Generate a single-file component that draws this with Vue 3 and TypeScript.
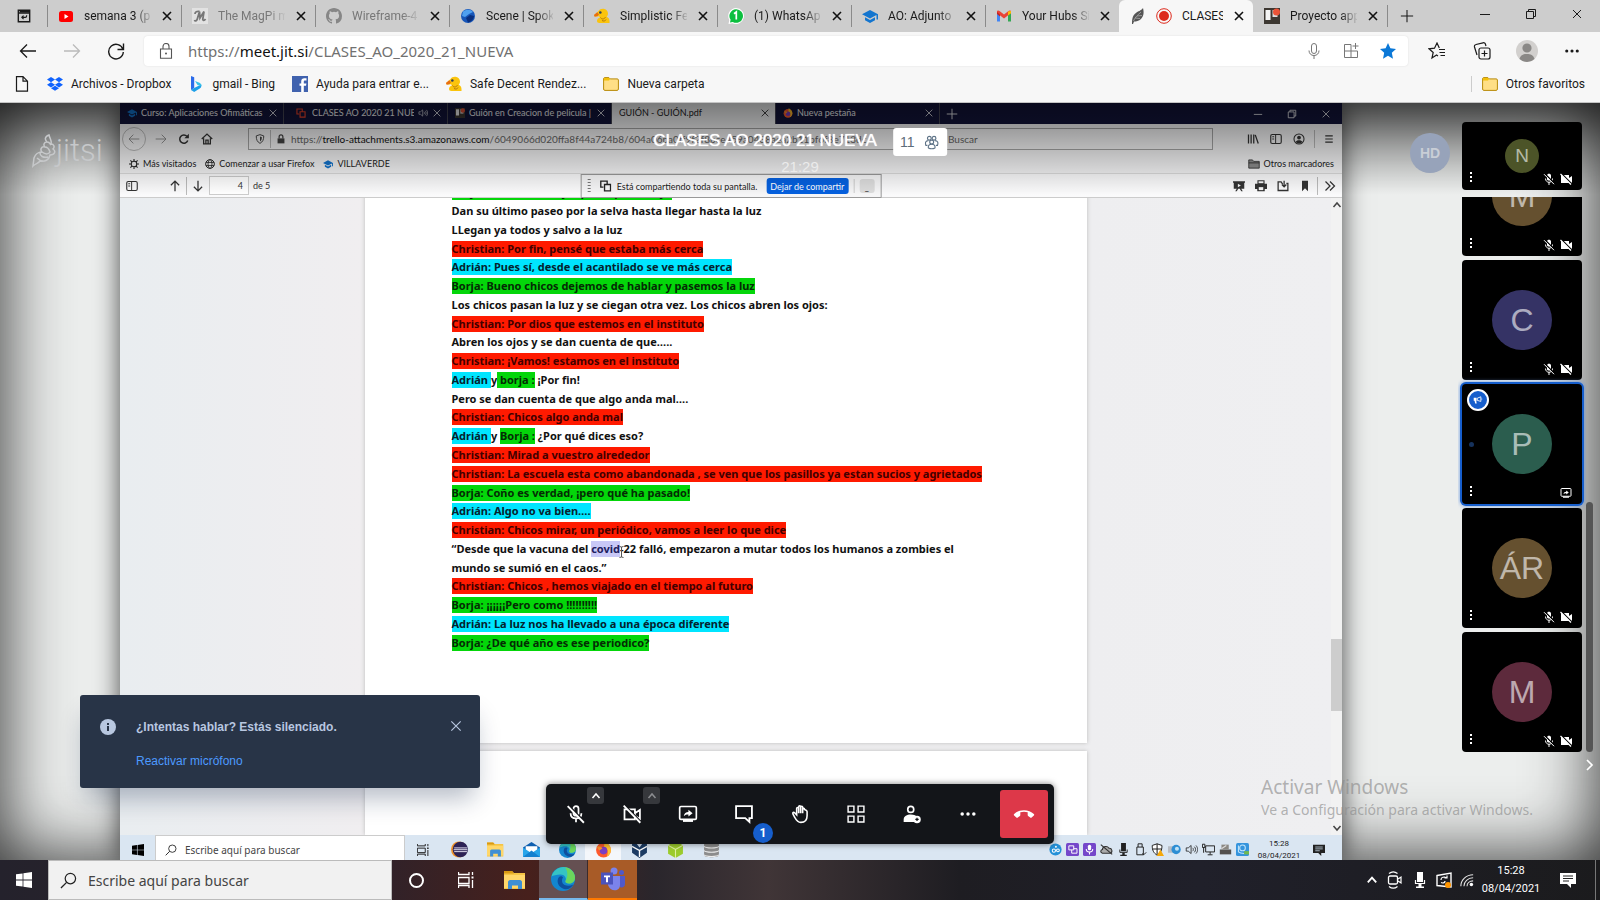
<script setup lang="ts">
import { ref } from 'vue'

interface Tab { icon: string; title: string; idle?: boolean; active?: boolean; recording?: boolean }
interface Tile { initials: string; color: string; sharing?: boolean }
type Tone = 'plain' | 'red' | 'blue' | 'green' | 'sel'
type Segment = [Tone, string]

const tabs: Tab[] = [
  { icon: 'youtube', title: 'semana 3 (pi' },
  { icon: 'magpi', title: 'The MagPi m', idle: true },
  { icon: 'github', title: 'Wireframe-4', idle: true },
  { icon: 'spoke', title: 'Scene | Spok' },
  { icon: 'duck', title: 'Simplistic Fe' },
  { icon: 'whatsapp', title: '(1) WhatsAp' },
  { icon: 'cap', title: 'AO: Adjunto' },
  { icon: 'gmail', title: 'Your Hubs Si' },
  { icon: 'feather', title: 'CLASES', active: true, recording: true },
  { icon: 'trello', title: 'Proyecto app' },
]

const favorites = [
  { icon: 'dropbox', title: 'Archivos - Dropbox' },
  { icon: 'bing', title: 'gmail - Bing' },
  { icon: 'facebook', title: 'Ayuda para entrar e...' },
  { icon: 'duck', title: 'Safe Decent Rendez...' },
  { icon: 'folder', title: 'Nueva carpeta' },
]

const innerTabs = [
  { icon: 'cap', title: 'Curso: Aplicaciones Ofimáticas' },
  { icon: 'screens', title: 'CLASES AO 2020 21 NUEVA', sound: true },
  { icon: 'trello', title: 'Guión en Creacion de pelicula |' },
  { icon: '', title: 'GUIÓN - GUIÓN.pdf', active: true },
  { icon: 'firefox', title: 'Nueva pestaña' },
]

const script: Segment[][] = [
  [['green', 'Borja: Bueno chicos ya queda poco, vaya']],
  [['plain', 'Dan su último paseo por la selva hasta llegar hasta la luz']],
  [['plain', 'LLegan ya todos y salvo a la luz']],
  [['red', 'Christian: Por fin, pensé que estaba más cerca']],
  [['blue', 'Adrián: Pues sí, desde el acantilado se ve más cerca']],
  [['green', 'Borja: Bueno chicos dejemos de hablar y pasemos la luz']],
  [['plain', 'Los chicos pasan la luz y se ciegan otra vez. Los chicos abren los ojos:']],
  [['red', 'Christian: Por dios que estemos en el instituto']],
  [['plain', 'Abren los ojos y se dan cuenta de que…..']],
  [['red', 'Christian: ¡Vamos! estamos en el instituto']],
  [['blue', 'Adrián '], ['plain', 'y'], ['green', ' borja :'], ['plain', ' ¡Por fin!']],
  [['plain', 'Pero se dan cuenta de que algo anda mal….']],
  [['red', 'Christian: Chicos algo anda mal']],
  [['blue', 'Adrián '], ['plain', 'y '], ['green', 'Borja :'], ['plain', ' ¿Por qué dices eso?']],
  [['red', 'Christian: Mirad a vuestro alrededor']],
  [['red', 'Christian: La escuela esta como abandonada , se ven que los pasillos ya estan sucios y agrietados']],
  [['green', 'Borja: Coño es verdad, ¡pero qué ha pasado!']],
  [['blue', 'Adrián: Algo no va bien….']],
  [['red', 'Christian: Chicos mirar, un periódico, vamos a leer lo que dice']],
  [['plain', '“Desde que la vacuna del '], ['sel', 'covid'], ['plain', '-22 falló, empezaron a mutar todos los humanos a zombies el']],
  [['plain', 'mundo se sumió en el caos.”']],
  [['red', 'Christian: Chicos , hemos viajado en el tiempo al futuro']],
  [['green', 'Borja: ¡¡¡¡¡¡Pero como !!!!!!!!!!']],
  [['blue', 'Adrián: La luz nos ha llevado a una época diferente']],
  [['green', 'Borja: ¿De qué año es ese periodico?']],
]

const tiles: Tile[] = [
  { initials: 'M', color: '#65502f' },
  { initials: 'C', color: '#353365' },
  { initials: 'P', color: '#2b5d4e', sharing: true },
  { initials: 'ÁR', color: '#65502f' },
  { initials: 'M', color: '#5d2a3c' },
]

const innerApps = ['taskview', 'eclipse', 'explorer', 'mail', 'edge', 'firefox', 'vbox', 'android', 'db']
const innerTray = ['jitsidot', 'purplescreens', 'purplemic', 'cloudoff', 'mic', 'usb', 'shieldwarn', 'globeblue', 'speaker', 'network', 'printer', 'intel']
const controls = [
  { icon: 'micoff', label: 'Activar micrófono', caret: true },
  { icon: 'camoff', label: 'Activar cámara', caret: true, dim: true },
  { icon: 'share', label: 'Compartir pantalla' },
  { icon: 'chat', label: 'Abrir chat', badge: '1' },
  { icon: 'hand', label: 'Levantar la mano' },
  { icon: 'gridview', label: 'Vista en cuadrícula' },
  { icon: 'invite', label: 'Invitar personas' },
  { icon: 'more', label: 'Más acciones' },
]

const page = ref('4')
const query = ref('')
const innerQuery = ref('')
const notice = ref(true)
</script>

<template>
  <div class="desktop">
    <svg class="defs" aria-hidden="true">
      <symbol id="x" viewBox="0 0 12 12"><path d="M2 2l8 8M10 2l-8 8" fill="none" stroke="currentColor" /></symbol>
      <symbol id="xbold" viewBox="0 0 12 12"><path d="M2 2l8 8M10 2l-8 8" fill="none" stroke="currentColor" stroke-width="1.600" /></symbol>
      <symbol id="plus" viewBox="0 0 16 16"><path d="M8 1v14M1 8h14" fill="none" stroke="currentColor" stroke-width="1.2" /></symbol>
      <symbol id="min" viewBox="0 0 12 12"><path d="M1 6.5h10" stroke="currentColor" /></symbol>
      <symbol id="restore" viewBox="0 0 12 12"><path d="M1.5 3.5h7v7h-7zM3.5 3.5v-2h7v7h-2" fill="none" stroke="currentColor" /></symbol>
      <symbol id="tabmenu" viewBox="0 0 16 16"><path d="M1.5 1.5h13v13h-13zM1.5 4.5h13" fill="none" stroke="currentColor" stroke-width="1.6" /><path d="M3 2h11v2H3z" fill="currentColor" /><path d="M7.500 7.500l-2 2 2 2M6 9.500h3.500a1.500 1.500 0 0 0 1.500-1.500V7" fill="none" stroke="currentColor" stroke-width="1.300" /></symbol>
      <symbol id="youtube" viewBox="0 0 16 16"><rect x="1" y="3" width="14" height="11" rx="2.500" fill="#f00" /><path d="M6.500 6v5l4-2.500z" fill="#fff" /></symbol>
      <symbol id="magpi" viewBox="0 0 16 16"><path d="M0 0h16v16H0z" fill="#e2e2e2" /><path d="M2.500 12c.5 1.500 2.300 1 2.800-1L7.500 3.500 8 10l4-6.500L10.800 11c-.1 2 1.700 1.500 2.700 0M3 6c0-2 2-3 4.500-2.500" fill="none" stroke="#777" stroke-width="1.800" /></symbol>
      <symbol id="github" viewBox="0 0 16 16"><path fill="#868686" d="M8 0C3.580 0 0 3.580 0 8c0 3.540 2.290 6.530 5.470 7.590.4.070.55-.17.55-.38v-1.490c-2.230.480-2.700-.940-2.700-.940-.360-.920-.890-1.170-.890-1.170-.730-.500.060-.490.060-.490.800.060 1.230.830 1.230.830.710 1.220 1.870.870 2.330.660.070-.520.280-.870.510-1.070-1.780-.200-3.640-.890-3.640-3.950 0-.870.310-1.590.820-2.150-.080-.200-.360-1.020.080-2.120 0 0 .670-.210 2.200.820a7.600 7.600 0 0 1 4 0c1.530-1.040 2.200-.820 2.200-.820.440 1.100.160 1.920.080 2.120.510.560.820 1.270.820 2.150 0 3.070-1.870 3.750-3.650 3.950.290.250.540.730.540 1.480v2.200c0 .210.150.460.550.380A8 8 0 0 0 16 8c0-4.420-3.580-8-8-8z" /></symbol>
      <symbol id="spoke" viewBox="0 0 16 16"><circle cx="8" cy="8" r="7" fill="#1756b8" /><path d="M3 3.500C6 1 11 1 13 4L9 6 5 9 2 8z" fill="#4fa0ef" /><path d="M6 10l4-3 4 1c0 3-3 6-6 6.500z" fill="#092f7e" /></symbol>
      <symbol id="duck" viewBox="0 0 16 16"><path d="M4.500 3C5.500 1.200 7.500.5 9.500.7c2.500.3 4.500 2.300 4.500 4.800 0 1.300-.5 2.300-1.300 3.300 1.500.7 2.800 2.200 2.800 4.200v2H5.500c-1.700 0-2.500-1-2.500-2.300 0-1.500 1.300-2.700 3-3.200l-1-1.300-3.500.5L0 7l3-2.500z" fill="#fbc40c" /><path d="M0 7l3.200-2.700L5 6.500 3.500 8l-3 .7z" fill="#e86d12" /><path d="M6.500 9.500c1 2 3.500 2 5-.3M8 12.500c1.500 1 3.500.5 4-1" fill="none" stroke="#b4770d" /><circle cx="6.300" cy="4.500" r="1.300" fill="#31405c" /></symbol>
      <symbol id="whatsapp" viewBox="0 0 16 16"><path d="M8 0a8 8 0 1 1-3.500 15.200L.5 16l.8-4A8 8 0 0 1 8 0z" fill="#fff" /><path d="M8 1.200a6.800 6.800 0 1 1-3.200 12.700l-2.800.6.6-2.700A6.800 6.800 0 0 1 8 1.200z" fill="#0cbf3f" /><path d="M6 5.700L8.300 4v7.500" fill="none" stroke="#fff" stroke-width="1.700" /></symbol>
      <symbol id="cap" viewBox="0 0 16 16"><path d="M8 2L0 6.200l8 4.300 6.500-3.500v4.500H16V6.200z" fill="#1375cf" /><path d="M3 9.200v3L8 15l5-2.800v-3l-5 2.700z" fill="#1375cf" /></symbol>
      <symbol id="gmail" viewBox="0 0 16 16"><path d="M1 4v9.500h3V7" fill="#4285f4" /><path d="M15 4v9.500h-3V7" fill="#34a853" /><path d="M1 3.500C1 2.500 2.500 2 3.500 3L8 6.500 12.500 3c1-1 2.500-.5 2.500.500V5l-7 5.500L1 5z" fill="#ea4335" /><path d="M12 3.400L15 3v2.300L12 7.500z" fill="#fbbc04" /><path d="M1 4l3 2.500v2L1 6z" fill="#c5221f" /></symbol>
      <symbol id="feather" viewBox="0 0 16 16"><path d="M13 0c1 4 1 8-2 11-2 2-5 2.500-7 2.500L3 16H2c0-6 1-9 4-11 2-2 5-2 7-5z" fill="#555" /><path d="M3.500 13C5 9 8 7 11 4M5 10l5 .5M7 8l5-.5" fill="none" stroke="#aaa" stroke-width=".8" /></symbol>
      <symbol id="record" viewBox="0 0 16 16"><circle cx="8" cy="8" r="7.300" fill="none" stroke="#dd2a1d" /><circle cx="8" cy="8" r="5" fill="#dd2a1d" /></symbol>
      <symbol id="trello" viewBox="0 0 16 16"><path d="M0 0h16v16H0z" fill="#3d3832" /><path d="M1.500 2h5v10h-5z" fill="#f4f4f4" /><path d="M8.500 2h5v7h-5z" fill="#ddd" /><circle cx="12.500" cy="4" r="3.500" fill="#ea5438" /></symbol>
      <symbol id="back" viewBox="0 0 18 18"><path d="M17 9H1.500M8 2.500L1.500 9 8 15.500" fill="none" stroke="currentColor" stroke-width="1.300" /></symbol>
      <symbol id="forward" viewBox="0 0 18 18"><path d="M1 9h15.500M10 2.500L16.500 9 10 15.500" fill="none" stroke="currentColor" stroke-width="1.300" /></symbol>
      <symbol id="reload" viewBox="0 0 18 18"><path d="M16 7.500A7.300 7.300 0 1 0 16.300 10M16.500 1.500v6h-6" fill="none" stroke="currentColor" stroke-width="1.400" /></symbol>
      <symbol id="lockline" viewBox="0 0 16 16"><path d="M2.500 6h11v9.300h-11zM5 6V3.500a3 3 0 0 1 6 0V6" fill="none" stroke="#555" stroke-width="1.100" /><circle cx="8" cy="10.600" r="1" fill="#555" /></symbol>
      <symbol id="micline" viewBox="0 0 16 16"><rect x="5.500" y=".5" width="5" height="10" rx="2.500" fill="none" stroke="#777" /><path d="M3 7.500c0 3 2 5 5 5s5-2 5-5M8 12.500V16" fill="none" stroke="#777" /></symbol>
      <symbol id="appsadd" viewBox="0 0 16 16"><path d="M8 1.500H1.500v13h13V8M1.500 8h13M8 1.500v13M12.500 0v6M9.500 3h6" fill="none" stroke="#777" /></symbol>
      <symbol id="star" viewBox="0 0 16 16"><path d="M8 0l2.400 5.300 5.600.6-4.200 3.900 1.200 5.900L8 12.800l-5 2.900 1.200-5.900L0 5.900l5.600-.6z" fill="#0b78d7" /></symbol>
      <symbol id="starlist" viewBox="0 0 18 18"><path d="M10 14l-1.500-1L4 16l1.200-5.500L1 6.800l5.500-.6L9 1l2.300 5M11 7.500h6M11.500 10.500H17M12.500 13.500H17" fill="none" stroke="currentColor" stroke-width="1.200" /></symbol>
      <symbol id="collect" viewBox="0 0 18 18"><rect x="6" y="6" width="11" height="11" rx="2" fill="none" stroke="currentColor" stroke-width="1.200" /><path d="M11.500 8.500v6M8.500 11.500h6M4 13L1.500 5A2 2 0 0 1 3 2.500l7-1.700A2 2 0 0 1 12.500 2.500L13 4" fill="none" stroke="currentColor" stroke-width="1.200" /></symbol>
      <symbol id="user" viewBox="0 0 22 22"><circle cx="11" cy="11" r="11" fill="#d2d0ce" /><circle cx="11" cy="8" r="4.600" fill="#8a8886" /><path d="M3.500 19c1-4 4-5 7.500-5s6.500 1 7.500 5a11 11 0 0 1-15 0z" fill="#8a8886" /></symbol>
      <symbol id="more" viewBox="0 0 24 24"><g fill="currentColor"><circle cx="5" cy="12" r="2.100" /><circle cx="12" cy="12" r="2.100" /><circle cx="19" cy="12" r="2.100" /></g></symbol>
      <symbol id="doc" viewBox="0 0 16 16"><path d="M2.500.7H9l4.500 4.500v10h-11zM9 .7v4.500h4.500" fill="none" stroke="currentColor" stroke-width="1.200" /></symbol>
      <symbol id="dropbox" viewBox="0 0 16 16"><path d="M4 1L0 3.600l4 2.600 4-2.600zM12 1L8 3.600l4 2.600 4-2.600zM0 8.800l4 2.600 4-2.600-4-2.600zM12 6.200L8 8.800l4 2.600 4-2.600zM4 12.300l4 2.500 4-2.500-4-2.600z" fill="#0f62fe" /></symbol>
      <symbol id="bing" viewBox="0 0 16 16"><path d="M3 0l3.200 1.200V12L3 14z" fill="#2b6bea" /><path d="M3 14l3.200-2 7 -3.500c.5 1.500 0 3-1.500 4L6.200 16z" fill="#1c9fe8" /><path d="M7 5l4.500 1.800c1.500.7 2 2 1.800 3.200L9.500 9z" fill="#35c1e8" /></symbol>
      <symbol id="facebook" viewBox="0 0 16 16"><path d="M0 0h16v16H0z" fill="#4062ae" /><path d="M14.500 4.500h-1.400c-1 0-1.300.5-1.300 1.300v1.700h2.600l-.4 2.300h-2.200V16H9.200V9.800H7.500V7.500h1.700V5.400c0-2 1.200-3.200 3.200-3.200h2.100z" fill="#fff" /></symbol>
      <symbol id="folder" viewBox="0 0 16 16"><path d="M.6 3c0-.9.500-1.400 1.300-1.400h4l1.300 1.300h7c.7 0 1.200.4 1.200 1.100V13c0 .9-.5 1.400-1.300 1.400H1.900C1 14.400.6 13.900.6 13z" fill="#ffdf86" stroke="#b88a08" /><path d="M1 3c0-.8.400-1 1-1h4l1 1.200L6 4.500H1z" fill="#f2c009" /></symbol>
      <symbol id="firefox" viewBox="0 0 16 16"><circle cx="8" cy="8.500" r="7" fill="#ff5a2c" /><path d="M9 .5c3 1.500 6 4 6 8 0 3-2 5.500-4 6.300C13 11 12 7 8.500 5.500z" fill="#ffc22e" /><circle cx="8" cy="9" r="3.600" fill="#7b3fc4" /><path d="M1.500 5.500C3 4.500 6 5 7 7l-3 2z" fill="#ff9230" /></symbol>
      <symbol id="screens" viewBox="0 0 16 16"><path d="M10 5V1.500H1.500v8H5M6.500 6h8v8.500h-8z" fill="none" stroke="currentColor" stroke-width="1.800" /></symbol>
      <symbol id="speaker" viewBox="0 0 16 16"><path d="M1.500 6h2.500l3.500-3v10L4 10H1.500zM9.500 6c1 1.200 1 3 0 4M11.500 4.500c2 2 2 5 0 7M13.500 3c2.700 3 2.700 7 0 10" fill="none" stroke="currentColor" /></symbol>
      <symbol id="ffreload" viewBox="0 0 16 16"><path d="M13 10A5.500 5.500 0 1 1 12 4.500" fill="none" stroke="currentColor" stroke-width="2" /><path d="M14.500 1v6h-6z" fill="currentColor" /></symbol>
      <symbol id="home" viewBox="0 0 16 16"><path d="M1 8l7-6.500L15 8M3.500 7v7.500h9V7M6.500 14V9.500h3V14" fill="none" stroke="currentColor" stroke-width="1.700" /></symbol>
      <symbol id="shield" viewBox="0 0 16 16"><path d="M8 1l6 2c0 6-1.500 9.500-6 12-4.500-2.500-6-6-6-12z" fill="none" stroke="currentColor" stroke-width="1.500" /><path d="M8 4l3 1c0 3-.8 5-3 7z" fill="currentColor" /></symbol>
      <symbol id="lock" viewBox="0 0 16 16"><path d="M2.500 7h11v8h-11z" fill="currentColor" /><path d="M5 7V4.500a3 3 0 0 1 6 0V7" fill="none" stroke="currentColor" stroke-width="2" /></symbol>
      <symbol id="search" viewBox="0 0 18 18"><circle cx="11" cy="7" r="5.500" fill="none" stroke="currentColor" stroke-width="1.300" /><path d="M7 11L1 17" stroke="currentColor" stroke-width="1.400" /></symbol>
      <symbol id="searchff" viewBox="0 0 16 16"><circle cx="6.500" cy="6.500" r="4.500" fill="none" stroke="currentColor" stroke-width="1.700" /><path d="M10 10l5 5" stroke="currentColor" stroke-width="2" /></symbol>
      <symbol id="library" viewBox="0 0 16 16"><path d="M2 2v12M5.500 2v12M9 2v12M11 2.500l4 11.500" fill="none" stroke="currentColor" stroke-width="1.700" /></symbol>
      <symbol id="sidebar" viewBox="0 0 16 16"><rect x="1" y="2" width="14" height="12" rx="2" fill="none" stroke="currentColor" stroke-width="1.500" /><path d="M7.500 2v12M3 5h2.500M3 8h2.500" stroke="currentColor" stroke-width="1.300" /></symbol>
      <symbol id="account" viewBox="0 0 16 16"><circle cx="8" cy="8" r="6.700" fill="none" stroke="currentColor" stroke-width="1.400" /><circle cx="8" cy="6" r="2.500" fill="currentColor" /><path d="M3.500 12c1-3 8-3 9 0-2 2.500-7 2.500-9 0z" fill="currentColor" /></symbol>
      <symbol id="menu" viewBox="0 0 16 16"><path d="M2 3h12M2 8h12M2 13h12" stroke="currentColor" stroke-width="1.800" /></symbol>
      <symbol id="gear" viewBox="0 0 16 16"><circle cx="8" cy="8" r="4.500" fill="none" stroke="currentColor" stroke-width="1.700" /><path d="M8 0v3M8 13v3M0 8h3M13 8h3M2.300 2.300l2.200 2.200M11.500 11.500l2.200 2.200M13.700 2.300l-2.200 2.200M4.500 11.500l-2.200 2.200" stroke="currentColor" stroke-width="1.700" /></symbol>
      <symbol id="globe" viewBox="0 0 16 16"><circle cx="8" cy="8" r="7" fill="none" stroke="currentColor" stroke-width="1.500" /><ellipse cx="8" cy="8" rx="3.200" ry="7" fill="none" stroke="currentColor" stroke-width="1.300" /><path d="M1.500 5.500h13M1.500 10.500h13" stroke="currentColor" stroke-width="1.300" /></symbol>
      <symbol id="folderff" viewBox="0 0 16 16"><path d="M1 13.500v-11h5l1.500 2H15v9zM1 6.500h14" fill="#8e8e8e" stroke="currentColor" /></symbol>
      <symbol id="up" viewBox="0 0 16 16"><path d="M8 15V2M2.500 7L8 1.500 13.500 7" fill="none" stroke="currentColor" stroke-width="1.700" /></symbol>
      <symbol id="down" viewBox="0 0 16 16"><path d="M8 1v13M2.500 9L8 14.500 13.500 9" fill="none" stroke="currentColor" stroke-width="1.700" /></symbol>
      <symbol id="present" viewBox="0 0 16 16"><path d="M0 1.500h16v2h-1v8h-4l2 3.500h-2l-2-3.500H7L5 15H3l2-3.500H1v-8H0z" fill="currentColor" /><path d="M6.500 5v4.500l4-2.200z" fill="#f5f5f5" /></symbol>
      <symbol id="print" viewBox="0 0 16 16"><path d="M4 1h8v4H4z" fill="none" stroke="currentColor" stroke-width="1.500" /><path d="M0 5h16v7h-3v3H3v-3H0z" fill="currentColor" /><path d="M5 9.500h6v4H5z" fill="#f5f5f5" /></symbol>
      <symbol id="save" viewBox="0 0 16 16"><path d="M7.500 5.500L5.500 2.500h-4v11.500h13V4.500h-2M9.500 1v7.500M6.500 6l3 3 3-3" fill="none" stroke="currentColor" stroke-width="1.700" /></symbol>
      <symbol id="mark" viewBox="0 0 16 16"><path d="M4 1h8v14l-4-4-4 4z" fill="currentColor" /></symbol>
      <symbol id="chevrons" viewBox="0 0 16 16"><path d="M2 2l6 6-6 6M8 2l6 6-6 6" fill="none" stroke="currentColor" stroke-width="1.700" /></symbol>
      <symbol id="people" viewBox="0 0 16 16"><g fill="none" stroke="#5e7387" stroke-width="1.200"><circle cx="5.500" cy="3.500" r="2" /><circle cx="10.500" cy="3.500" r="2" /><circle cx="8" cy="7.500" r="2.100" /><path d="M4.500 13.800c-.5-2.500 1-4 3.500-4s4 1.500 3.500 4c-2 1-5 1-7 0zM3.500 11H1.800C.8 8 1.500 6 4.500 6M12.500 11h1.700c1-3 .3-5-2.700-5" /></g></symbol>
      <symbol id="micoff" viewBox="0 0 24 24"><path d="M9 8V5.500a3 3 0 0 1 6 0V11c0 1.700-1.300 3-3 3s-3-1.300-3-3zM5.500 11c0 4 2.500 6.300 6.500 6.300s6.500-2.300 6.500-6.300M12 17.300V22" fill="none" stroke="currentColor" stroke-width="2.100" /><path d="M3.500 2l19 19.500" stroke="#131519" stroke-width="2" /><path d="M2 2.500L21.500 22.500" stroke="currentColor" stroke-width="2.200" /></symbol>
      <symbol id="camoff" viewBox="0 0 24 24"><path d="M3 6.500h12.500v12H3zM15.500 11L21.500 7v11l-6-4" fill="none" stroke="currentColor" stroke-width="2.100" /><path d="M3.800 2l19 19.500" stroke="#131519" stroke-width="2" /><path d="M2 2L22 22.500" stroke="currentColor" stroke-width="2.200" /></symbol>
      <symbol id="share" viewBox="0 0 24 24"><rect x="2" y="3" width="20" height="15.500" rx="1.500" fill="none" stroke="currentColor" stroke-width="2" /><path d="M6 19h12v2.500H6z" fill="currentColor" /><path d="M7 14.500c.5-3.500 2.500-5 5.500-5V7l5 4-5 4v-2.500c-2.500 0-4 .5-5.500 2z" fill="currentColor" /></symbol>
      <symbol id="chat" viewBox="0 0 24 24"><path d="M2.500 2.500h19V17h-3v4.500L13.500 17h-11z" fill="none" stroke="currentColor" stroke-width="2.200" /></symbol>
      <symbol id="hand" viewBox="0 0 24 24"><path d="M8 13V5.500c0-1.800 2.400-1.800 2.400 0V11 3.500c0-1.800 2.400-1.800 2.400 0V11 4c0-1.800 2.400-1.800 2.400 0v7V6.500c0-1.700 2.300-1.700 2.300 0 0 0 3 1 3 2.500v5c0 5-3 8-7.500 8-4 0-5.500-2.500-7-5.500L3.500 12c-.7-1.700 1-2.500 2-1.500L8 13z" fill="none" stroke="currentColor" stroke-width="1.900" /></symbol>
      <symbol id="gridview" viewBox="0 0 24 24"><path d="M2.500 2.500h7v7h-7zM14.500 2.500h7v7h-7zM2.500 14.500h7v7h-7zM14.500 14.500h7v7h-7z" fill="none" stroke="currentColor" stroke-width="1.700" /></symbol>
      <symbol id="invite" viewBox="0 0 24 24"><circle cx="10.500" cy="6.500" r="3.600" fill="none" stroke="currentColor" stroke-width="2" /><path d="M2 21.500v-3c0-4 4-6 8.500-6 4 0 7 1 8 4v5z" fill="currentColor" /><circle cx="18" cy="18.500" r="4.500" fill="currentColor" /><path d="M18 16.500v4M16 18.500h4" stroke="#131519" stroke-width="1.500" /></symbol>
      <symbol id="hangup" viewBox="0 0 28 28"><path d="M14 9.500c-4.500 0-8.500 1.500-11.500 4.500-.5.500-.5 1.200 0 1.700l2.600 2.500c.5.500 1.100.5 1.600 0l2.500-2c.4-.3.500-.6.500-1V12c2.800-.9 5.800-.9 8.600 0v3.200c0 .4.100.7.500 1l2.500 2c.5.500 1.100.500 1.600 0l2.600-2.500c.5-.5.500-1.200 0-1.700-3-3-7-4.500-11.500-4.500z" fill="#fff" /></symbol>
      <symbol id="caret" viewBox="0 0 10 10"><path d="M1.500 7L5 3l3.500 4" fill="none" stroke="currentColor" stroke-width="1.500" /></symbol>
      <symbol id="dots" viewBox="0 0 4 12"><g fill="#fff"><path d="M1 1h2v2H1zM1 5h2v2H1zM1 9h2v2H1z" /></g></symbol>
      <symbol id="tmic" viewBox="0 0 12 12"><path d="M4 2.500C4 0 8 0 8 2.500V6c0 2-4 2-4 0zM5.500 9h1v3h-1z" fill="#fff" /><path d="M2.500 5.500c0 5 7 5 7 0" fill="none" stroke="#fff" /><path d="M1.800.8l9.500 9.500" stroke="#000" stroke-width="1.500" /><path d="M1 1.200l10 10" stroke="#fff" /></symbol>
      <symbol id="tcam" viewBox="0 0 12 12"><path d="M1 2h8v3l3-2v7L9 8.500V10H1z" fill="#fff" /><path d="M1.300.5l10 10" stroke="#000" stroke-width="1.500" /><path d="M.5 1l10.500 10.500" stroke="#fff" stroke-width="1.200" /></symbol>
      <symbol id="horn" viewBox="0 0 14 14"><path d="M1 4h4v4H4.500l.7 4H3L2.200 8H1z" fill="#fff" /><path d="M6 4.500L11 2.500v6.500L6 7.500z" fill="none" stroke="#fff" stroke-width="1.200" /><path d="M11.500 5.700h1.500" stroke="#fff" /></symbol>
      <symbol id="info" viewBox="0 0 16 16"><circle cx="8" cy="8" r="8" fill="#b8c7e0" /><path d="M7 7h2v5H7zM7 4h2v2H7z" fill="#283447" /></symbol>
      <symbol id="chev" viewBox="0 0 12 12"><path d="M3 1l5 5-5 5" fill="none" stroke="#fff" stroke-width="1.700" /></symbol>
      <symbol id="ibeam" viewBox="0 0 5 12"><path d="M.5.5L2.500 1l2-.5M2.500 1v10M.5 11.500l2-.5 2 .5" fill="none" stroke="#555" /></symbol>
      <symbol id="jitsibird" viewBox="0 0 24 34"><path d="M17 1c-5 2-4 5-2 7-3 0-4 3-2 5-4-1-5 3-3 5-4 0-7 3-8 6l-1 8c3-3 5-2 7-5 5 1 9-1 10-6 5 0 6-4 3-6 2-2 1-5-2-5 1-3-1-5-2-9zM15 8c3 0 3 2 4 3M13 13c3 0 4 2 5 5-1 2-4 3-8 0M5 24c2 2 3 3 6 3M8 19c0 3 3 5 8 4" fill="none" stroke="#c6c8ca" stroke-width="1.500" /></symbol>
      <symbol id="win" viewBox="0 0 16 16"><path d="M0 2.300L6.600 1.400v6.200H0zM7.400 1.300L16 0v7.600H7.400zM0 8.400h6.600v6.200L0 13.700zM7.400 8.400H16V16l-8.600-1.300z" fill="currentColor" /></symbol>
      <symbol id="taskview" viewBox="0 0 16 16"><path d="M.5 0v2.500h10.500V0M.5 5.500h10.500v6H.5zM.5 16v-2.500h10.500V16M14.500 0v3M14.500 8v8" fill="none" stroke="currentColor" stroke-width="1.300" /><path d="M13.500 4.500h2v2h-2z" fill="currentColor" /></symbol>
      <symbol id="explorer" viewBox="0 0 22 20"><path d="M0 1h8l2 2h11v16H0z" fill="#f5c444" /><path d="M0 1h8l2 2.500H0z" fill="#d99a13" /><path d="M0 5h21v13H0z" fill="#ffd76a" /><path d="M4 19v-7c0-1 1-2 2-2h10c1 0 2 1 2 2v7h-4v-3.500H8V19z" fill="#3d8fd4" /></symbol>
      <symbol id="edge" viewBox="0 0 24 24"><circle cx="12" cy="12" r="12" fill="#1386cf" /><path d="M.5 9.500C2 4 7 0 12.500 0 19 0 24 5 24 10.500c0 4-3 6-6 6-2.500 0-4-1-3.500-2.500 1.500-3-1-6.500-5-6.500-4 0-7.500 1-9 2z" fill="#35c3c4" /><path d="M14 .2C20 1 24 6 24 10.500c0 4-3 6-6 6-2.500 0-4-1-3.500-2.500C17 10 17 4 14 .2z" fill="#6bd65c" /><path d="M8 10c-3 4-1 10 5 12 4 1 7-1 9.500-4.500-6 2.500-11.500 1-11.500-4 0-2 1-3 1-3-1-2-3-1.500-4-.5z" fill="#0d4f9e" /></symbol>
      <symbol id="teams" viewBox="0 0 24 24"><circle cx="13" cy="4" r="3.500" fill="#7b83eb" /><circle cx="20.500" cy="5.500" r="2.500" fill="#5059c9" /><path d="M17 9h7v8c0 3-3 4.500-5 3z" fill="#5059c9" /><path d="M7 9h12v9c0 7-10 7-12 0z" fill="#7b83eb" /><path d="M0 5.500h12v12H0z" fill="#4b53bc" /><path d="M3 8.500h6v1.700H7v5H5v-5H3z" fill="#fff" /></symbol>
      <symbol id="eclipse" viewBox="0 0 16 16"><circle cx="7.500" cy="8" r="7.500" fill="#f0932b" /><circle cx="8.800" cy="8" r="7.200" fill="#2c2255" /><path d="M3 6.500h12M2.500 8.200h13M3 10h12" stroke="#e8e6f2" stroke-width=".9" /></symbol>
      <symbol id="mail" viewBox="0 0 16 16"><path d="M0 6l8-5 8 5v9H0z" fill="#0f5fb0" /><path d="M2.500 5h11v4L8 12 2.500 9z" fill="#fff" /><path d="M0 6l8 5.500L16 6v9H0z" fill="#27a5ea" /><path d="M0 15l8-6 8 6z" fill="#1380cf" /></symbol>
      <symbol id="vbox" viewBox="0 0 16 16"><path d="M1 1l4 1 3 4 3-4 4-1v10l-7 5-7-5z" fill="#1c3b63" /><path d="M1 5l7 4 7-4M8 9v6" stroke="#fff" fill="none" stroke-width="1.300" /></symbol>
      <symbol id="android" viewBox="0 0 16 16"><path d="M8 0l7 4v8l-7 4-7-4V4z" fill="#9ccb2c" /><path d="M1 4l7 4 7-4M8 8v8" stroke="#dff0a5" fill="none" /></symbol>
      <symbol id="db" viewBox="0 0 16 16"><path d="M1 2.500C1 0 15 0 15 2.500v11C15 16 1 16 1 13.500z" fill="#8c8c8c" /><path d="M1 5c2 2 12 2 14 0M1 9c2 2 12 2 14 0M1 13c2 2 12 2 14 0" fill="none" stroke="#ececec" /></symbol>
      <symbol id="jitsidot" viewBox="0 0 16 16"><circle cx="8" cy="8" r="7.500" fill="#2491d8" /><circle cx="6" cy="9.500" r="2" fill="none" stroke="#fff" stroke-width="1.300" /><circle cx="11" cy="9" r="1.700" fill="none" stroke="#fff" stroke-width="1.300" /><circle cx="8.500" cy="4.500" r="1.200" fill="#fff" /></symbol>
      <symbol id="purplescreens" viewBox="0 0 16 16"><rect width="16" height="16" rx="2" fill="#7547ca" /><path d="M3.500 3.500h6v5h-6zM7 8.500v4h6.500V7h-4" fill="none" stroke="#fff" stroke-width="1.200" /></symbol>
      <symbol id="purplemic" viewBox="0 0 16 16"><rect width="16" height="16" rx="2" fill="#7547ca" /><rect x="6" y="2" width="4" height="7" rx="2" fill="#fff" /><path d="M4 7.500c0 5 8 5 8 0M8 11v3" fill="none" stroke="#fff" stroke-width="1.300" /></symbol>
      <symbol id="cloudoff" viewBox="0 0 16 16"><path d="M3 12.500c-3-.5-2.500-4 0-4.500 0-4 6-5 8-1.500 4-.5 5 5 1.500 6z" fill="#aaa" stroke="#333" stroke-width="1.300" /><path d="M1 2l14 12" stroke="#333" stroke-width="1.500" /></symbol>
      <symbol id="mic" viewBox="0 0 16 16"><path d="M5 0h6v10H5zM6.500 12h3v2.500h-3zM4 14.500h8V16H4z" fill="currentColor" /><path d="M3.500 8v3.500h9V8" fill="none" stroke="currentColor" stroke-width="1.200" /></symbol>
      <symbol id="usb" viewBox="0 0 16 16"><path d="M5 5V1h5v4M3.500 5h8v9.500h-8zM10 13l2 1.500 3-3" fill="none" stroke="currentColor" stroke-width="1.200" /></symbol>
      <symbol id="shieldwarn" viewBox="0 0 16 16"><path d="M7.500 1l6 2c0 6-1.500 9-6 12-4.500-3-6-6-6-12z" fill="#fff" stroke="#222" stroke-width="1.200" /><path d="M7.500 1v13M1.500 7.500h12" stroke="#222" stroke-width="1.300" /><path d="M11.500 8l4.500 8H7z" fill="#f6a90b" /></symbol>
      <symbol id="globeblue" viewBox="0 0 16 16"><path d="M0 4h8v8H0z" fill="#b6bcc4" /><circle cx="10" cy="8" r="5.700" fill="#2d8ed4" /><circle cx="11" cy="7" r="2.500" fill="#bfe2f5" /></symbol>
      <symbol id="network" viewBox="0 0 16 16"><path d="M4.500 3.500h11v7.500h-11zM10 11v3M7 14.500h6M.5 1.500h3v4h-3zM2 5.500V12" fill="none" stroke="currentColor" stroke-width="1.200" /></symbol>
      <symbol id="printer" viewBox="0 0 16 16"><path d="M1 8h14v6H1z" fill="#53504e" /><path d="M3 2h9v6H3z" fill="#8b8883" /><path d="M3 7l6-4" stroke="#ddd" stroke-width="1.500" /></symbol>
      <symbol id="intel" viewBox="0 0 16 16"><rect width="16" height="16" rx="2" fill="#3594dd" /><circle cx="8" cy="6" r="3.500" fill="none" stroke="#bfe4fa" stroke-width="1.300" /><path d="M3 3v8c2 2 5 2 7 2" fill="none" stroke="#bfe4fa" stroke-width="1.300" /><path d="M10 10h6v4h-6z" fill="#72b84e" /></symbol>
      <symbol id="note" viewBox="0 0 16 16"><path d="M0 1h16v11h-5v4l-4-4H0z" fill="currentColor" /></symbol>
      <symbol id="notelines" viewBox="0 0 16 16"><path d="M0 1h16v11h-5v4l-4-4H0z" fill="currentColor" /><path d="M3 4h10M3 6.500h10M3 9h6" stroke="#cfe0ee" /></symbol>
      <symbol id="meetnow" viewBox="0 0 18 18"><rect x="2.500" y="5" width="9" height="8" rx="1.500" fill="none" stroke="#fff" stroke-width="1.300" /><path d="M12 8l3-2v6l-3-2M3 2.500c2.500-2 6-2 8.500 0M3 15.500c2.500 2 6 2 8.500 0" fill="none" stroke="#fff" stroke-width="1.200" /></symbol>
      <symbol id="update" viewBox="0 0 16 16"><path d="M1 3.500L15 1v14L1 13.500z" fill="none" stroke="#fff" stroke-width="1.400" /><path d="M5 8c0-2 1.500-3 3.500-3L11 6M11 3.500V6H8.500M9 9c0 1.500-1 2-2.500 2L5 10.500" fill="none" stroke="#fff" stroke-width="1.200" /><circle cx="12" cy="13" r="3" fill="#ff9500" /></symbol>
      <symbol id="wifi" viewBox="0 0 16 16"><g fill="none" stroke="#e6e6e6" stroke-width="1.200"><path d="M1 15C1 8 7 2 15 2M4.500 15C4.500 10 9 5.500 15 5.500M8 15c0-3.500 3-6 7-6" /></g><circle cx="13" cy="13" r="2" fill="#fff" /></symbol>
    </svg>

    <header class="chrome">
      <nav class="tabstrip" aria-label="Pestañas">
        <button class="tabmenu" aria-label="Menú de pestañas"><svg><use href="#tabmenu" /></svg></button>
        <div v-for="t in tabs" :key="t.title" class="tab" :class="{ active: t.active, idle: t.idle }">
          <svg class="i16"><use :href="'#' + t.icon" /></svg>
          <svg v-if="t.recording" class="i16"><use href="#record" /></svg>
          <span class="tab-title">{{ t.title }}</span>
          <button class="tab-x" aria-label="Cerrar pestaña"><svg><use href="#xbold" /></svg></button>
        </div>
        <button class="newtab" aria-label="Nueva pestaña"><svg><use href="#plus" /></svg></button>
        <div class="winctl">
          <button aria-label="Minimizar"><svg><use href="#min" /></svg></button>
          <button aria-label="Restaurar"><svg><use href="#restore" /></svg></button>
          <button aria-label="Cerrar"><svg><use href="#x" /></svg></button>
        </div>
      </nav>
      <div class="navrow">
        <button aria-label="Atrás"><svg><use href="#back" /></svg></button>
        <button class="off" aria-label="Adelante"><svg><use href="#forward" /></svg></button>
        <button aria-label="Actualizar"><svg><use href="#reload" /></svg></button>
        <div class="address">
          <svg class="lk"><use href="#lockline" /></svg>
          <div class="url">https://<b>meet.jit.si</b>/CLASES_AO_2020_21_NUEVA</div>
          <button aria-label="Voz"><svg><use href="#micline" /></svg></button>
          <button aria-label="Instalar aplicación"><svg><use href="#appsadd" /></svg></button>
          <button aria-label="Favorito"><svg><use href="#star" /></svg></button>
        </div>
        <div class="navright">
          <button aria-label="Favoritos"><svg><use href="#starlist" /></svg></button>
          <button aria-label="Colecciones"><svg><use href="#collect" /></svg></button>
          <button aria-label="Perfil"><svg class="i22"><use href="#user" /></svg></button>
          <button aria-label="Más"><svg><use href="#more" /></svg></button>
        </div>
      </div>
      <div class="favrow">
        <a href="#" aria-label="Documento"><svg class="i16"><use href="#doc" /></svg></a>
        <a v-for="f in favorites" :key="f.title" href="#"><svg class="i16"><use :href="'#' + f.icon" /></svg>{{ f.title }}</a>
        <a class="other" href="#"><svg class="i16"><use href="#folder" /></svg>Otros favoritos</a>
      </div>
    </header>

    <main class="stage">
      <div class="leftside">
        <a class="logo" href="#"><svg><use href="#jitsibird" /></svg>jitsi</a>
      </div>

      <section class="shared">
        <div class="ff-tabs">
          <div v-for="t in innerTabs" :key="t.title" class="ff-tab" :class="{ active: t.active }">
            <svg v-if="t.icon" class="i10" :class="t.icon"><use :href="'#' + t.icon" /></svg>
            <span class="ff-title">{{ t.title }}</span>
            <svg v-if="t.sound" class="i10"><use href="#speaker" /></svg>
            <svg class="i10"><use href="#x" /></svg>
          </div>
          <svg class="ff-plus"><use href="#plus" /></svg>
          <div class="ff-win">
            <svg class="i10"><use href="#min" /></svg><svg class="i10"><use href="#restore" /></svg><svg class="i10"><use href="#x" /></svg>
          </div>
        </div>
        <div class="ff-nav">
          <span class="ff-back"><svg class="i12"><use href="#back" /></svg></span>
          <svg class="i12 pale"><use href="#forward" /></svg>
          <svg class="i12"><use href="#ffreload" /></svg>
          <svg class="i12"><use href="#home" /></svg>
          <div class="ff-url">
            <svg class="i10"><use href="#shield" /></svg><i></i><svg class="i10"><use href="#lock" /></svg>
            <span>https://<b>trello-attachments.s3.amazonaws.com</b>/6049066d020ffa8f44a724b8/604a06ba0ff9f2f8bce459a0438aea2b11bf6f8e713dc/</span>
            <svg class="i12"><use href="#more" /></svg>
          </div>
          <div class="ff-search"><svg class="i10"><use href="#searchff" /></svg>Buscar</div>
          <div class="ff-icons">
            <svg class="i12"><use href="#library" /></svg><svg class="i12"><use href="#sidebar" /></svg><svg class="i12"><use href="#account" /></svg><i></i><svg class="i10"><use href="#menu" /></svg>
          </div>
        </div>
        <div class="ff-marks">
          <a href="#"><svg class="i10"><use href="#gear" /></svg>Más visitados</a>
          <a href="#"><svg class="i10"><use href="#globe" /></svg>Comenzar a usar Firefox</a>
          <a href="#"><svg class="i10"><use href="#cap" /></svg>VILLAVERDE</a>
          <a class="other" href="#"><svg class="i12"><use href="#folderff" /></svg>Otros marcadores</a>
        </div>
        <div class="pdfbar">
          <svg class="i12 side"><use href="#sidebar" /></svg>
          <svg class="i12"><use href="#up" /></svg><i></i><svg class="i12"><use href="#down" /></svg>
          <label><input v-model="page" aria-label="Página">de 5</label>
          <div class="pdf-tools">
            <svg class="i12"><use href="#present" /></svg><svg class="i12"><use href="#print" /></svg><svg class="i12"><use href="#save" /></svg><svg class="i12"><use href="#mark" /></svg><i></i><svg class="i12"><use href="#chevrons" /></svg>
          </div>
        </div>
        <div class="sharebar">
          <span class="grip"></span>
          <svg class="i12"><use href="#screens" /></svg>
          <span>Está compartiendo toda su pantalla.</span>
          <button class="stop">Dejar de compartir</button>
          <i></i>
          <button class="mini" aria-label="Minimizar">_</button>
        </div>

        <div class="viewer">
          <div class="pages">
            <article class="sheet first">
              <p v-for="(line, n) in script" :key="n"><span v-for="(s, k) in line" :key="k" :class="s[0]">{{ s[1] }}<svg v-if="s[0] === 'sel'"><use href="#ibeam" /></svg></span></p>
            </article>
            <article class="sheet next"></article>
          </div>
          <div class="scroll">
            <svg class="i10"><use href="#caret" /></svg>
            <div class="thumb"></div>
            <svg class="i10 flip"><use href="#caret" /></svg>
          </div>
        </div>

        <div class="ibar">
          <button class="istart" aria-label="Inicio"><svg class="i12"><use href="#win" /></svg></button>
          <label class="isearch"><svg class="i12"><use href="#search" /></svg><input v-model="innerQuery" placeholder="Escribe aquí para buscar" aria-label="Buscar en el equipo compartido"></label>
          <div class="iapps">
            <span v-for="a in innerApps" :key="a" :class="a"><svg><use :href="'#' + a" /></svg></span>
          </div>
          <div class="itray">
            <svg v-for="a in innerTray" :key="a"><use :href="'#' + a" /></svg>
          </div>
          <div class="iclock"><span>15:28</span><span>08/04/2021</span></div>
          <svg class="i12"><use href="#notelines" /></svg>
        </div>
      </section>

      <aside class="film">
        <span class="hd">HD</span>
        <div class="strip">
          <div class="tile local">
            <span class="avatar small">N</span>
            <svg class="kebab"><use href="#dots" /></svg>
            <div class="status"><svg><use href="#tmic" /></svg><svg><use href="#tcam" /></svg></div>
          </div>
          <div class="remote">
            <div v-for="(t, n) in tiles" :key="n" class="tile" :class="{ pinned: t.sharing }">
              <span class="avatar" :style="{ background: t.color }">{{ t.initials }}</span>
              <span v-if="t.sharing" class="horn"><svg><use href="#horn" /></svg></span>
              <span v-if="t.sharing" class="level"></span>
              <svg class="kebab"><use href="#dots" /></svg>
              <div class="status">
                <svg v-if="t.sharing"><use href="#share" /></svg>
                <template v-else><svg><use href="#tmic" /></svg><svg><use href="#tcam" /></svg></template>
              </div>
            </div>
          </div>
          <div class="rail"></div>
          <button class="fold" aria-label="Ocultar miniaturas"><svg><use href="#chev" /></svg></button>
        </div>
      </aside>

      <div class="shade"></div>
      <div class="subject">
        <div class="subject-row">
          <h1>CLASES AO 2020 21 NUEVA</h1>
          <button>11<svg><use href="#people" /></svg></button>
        </div>
        <time>21:29</time>
      </div>

      <div v-if="notice" class="notice" role="status">
        <svg class="i16"><use href="#info" /></svg>
        <div class="notice-body">
          <strong>¿Intentas hablar? Estás silenciado.</strong>
          <a href="#">Reactivar micrófono</a>
        </div>
        <button aria-label="Cerrar aviso" @click="notice = false"><svg><use href="#x" /></svg></button>
      </div>

      <div class="toolbox">
        <div v-for="c in controls" :key="c.icon" class="tool">
          <button class="tool-btn" :aria-label="c.label"><svg><use :href="'#' + c.icon" /></svg></button>
          <button v-if="c.caret" class="caret" :class="{ dim: c.dim }" aria-label="Opciones"><svg><use href="#caret" /></svg></button>
          <span v-if="c.badge" class="badge">{{ c.badge }}</span>
        </div>
        <button class="hang" aria-label="Colgar"><svg><use href="#hangup" /></svg></button>
      </div>

      <div class="activate"><p>Activar Windows</p><p>Ve a Configuración para activar Windows.</p></div>
    </main>

    <footer class="taskbar">
      <button class="start" aria-label="Inicio"><svg class="i16"><use href="#win" /></svg></button>
      <label class="find"><svg><use href="#search" /></svg><input v-model="query" placeholder="Escribe aquí para buscar" aria-label="Buscar"></label>
      <button class="app" aria-label="Cortana"><span class="ring"></span></button>
      <button class="app" aria-label="Vista de tareas"><svg class="i16"><use href="#taskview" /></svg></button>
      <button class="app" aria-label="Explorador"><svg class="i22"><use href="#explorer" /></svg></button>
      <button class="app on" aria-label="Edge"><svg class="i24"><use href="#edge" /></svg></button>
      <button class="app alert" aria-label="Teams"><svg class="i24"><use href="#teams" /></svg></button>
      <div class="tray">
        <svg class="i12"><use href="#caret" /></svg>
        <svg class="i18"><use href="#meetnow" /></svg>
        <svg class="i16"><use href="#mic" /></svg>
        <svg class="i16"><use href="#update" /></svg>
        <svg class="i14"><use href="#wifi" /></svg>
      </div>
      <div class="clock"><span>15:28</span><span>08/04/2021</span></div>
      <button class="notes" aria-label="Notificaciones"><svg class="i16"><use href="#note" /><path d="M3 4h10M3 6.500h10M3 9h6" stroke="#222" /></svg></button>
    </footer>
  </div>
</template>

<style>
body { margin: 0; }
</style>

<style scoped>
* { box-sizing: border-box; }
button, input { font: inherit; color: inherit; border: 0; padding: 0; margin: 0; background: none; }
button { display: flex; align-items: center; justify-content: center; }
a { color: inherit; text-decoration: none; }
p, h1 { margin: 0; }
svg { display: block; flex: none; width: 18px; height: 18px; }
.defs { position: absolute; width: 0; height: 0; }
.i10 { width: 10px; height: 10px; }
.i12 { width: 12px; height: 12px; }
.i14 { width: 14px; height: 14px; }
.i16 { width: 16px; height: 16px; }
.i18 { width: 18px; height: 18px; }
.i22 { width: 22px; height: 22px; }
.i24 { width: 24px; height: 24px; }

.desktop { display: flex; flex-direction: column; height: 100vh; overflow: hidden; font-family: Roboto, "Noto Sans", sans-serif; font-size: 12px; color: #1a1a1a; }

/* Browser chrome */
.chrome { background: #f7f7f7; border-bottom: 1px solid #c4c4c4; flex: none; }
.tabstrip { display: flex; height: 32px; background: #cdcdcd; }
.tabmenu { width: 47px; flex: none; }
.tabmenu svg { width: 14px; height: 14px; }
.tab { display: flex; align-items: center; gap: 10px; flex: 0 1 134px; min-width: 0; padding: 0 8px 0 10px; border-left: 1px solid transparent; border-image: linear-gradient(transparent 6px, #8a8a8a 6px, #8a8a8a 26px, transparent 26px) 1; }
.tab-title { flex: 1; min-width: 0; overflow: hidden; white-space: nowrap; mask-image: linear-gradient(90deg, #000 75%, rgba(0, 0, 0, .1)); }
.tab.idle { color: #777; }
.tab-x { color: #111; }
.tab-x svg { width: 12px; height: 12px; }
.tab.active { background: #f7f7f7; border-image: none; border-radius: 6px 6px 0 0; }
.tab.active + .tab { border-image: none; }
.tab.active .tab-title { mask-image: none; }
.newtab { width: 38px; border-left: 1px solid transparent; border-image: linear-gradient(transparent 6px, #8a8a8a 6px, #8a8a8a 26px, transparent 26px) 1; }
.newtab svg { width: 14px; height: 14px; }
.winctl { display: flex; margin-left: auto; padding-bottom: 4px; }
.winctl button { width: 46px; }
.winctl svg { width: 12px; height: 12px; }
.navrow { display: flex; align-items: center; padding: 4px 6px 0; }
.navrow > button { width: 44px; height: 30px; }
.off { color: #bbb; }
.address { display: flex; align-items: center; flex: 1; height: 30px; margin-left: 6px; padding: 0 2px 0 14px; background: #fff; border-radius: 4px; box-shadow: 0 0 2px #ddd; }
.address svg { width: 16px; height: 16px; }
.url { flex: 1; margin-left: 14px; font-family: "Noto Sans", sans-serif; font-size: 15px; color: #717171; white-space: nowrap; }
.url b { font-weight: 400; color: #111; }
.address button { width: 37px; }
.navright { display: flex; margin-left: 6px; }
.navright button { width: 45px; }
.favrow { display: flex; align-items: center; gap: 17px; height: 36px; padding: 0 15px 0 14px; white-space: nowrap; }
.favrow a { display: flex; align-items: center; gap: 8px; }
.other { margin-left: auto; }
.favrow .other { padding-left: 10px; border-left: 1px solid #ccc; }

/* Meeting stage */
.stage { position: relative; display: grid; grid-template-columns: 120px minmax(0, 1fr) 258px; flex: 1; min-height: 0; overflow: hidden; background: #eceeed; box-shadow: inset 0 0 70px rgba(0, 0, 0, .85); }
.leftside { padding: 30px 0 0 32px; }
.logo { position: relative; z-index: 3; display: flex; align-items: center; font-size: 31px; font-weight: 300; line-height: 36px; color: #c6c8ca; }
.logo svg { width: 24px; height: 34px; }
.shared { position: relative; display: flex; flex-direction: column; min-height: 0; background: #f6f6f7; box-shadow: 0 0 24px rgba(0, 0, 0, .7); font-family: Lato, Roboto, sans-serif; font-size: 9px; color: #222; }
.ff-tabs { display: flex; align-items: center; height: 21px; background: #12143a; color: #f4f4f6; }
.ff-tab { display: flex; align-items: center; gap: 4px; flex: 0 1 164px; min-width: 0; height: 21px; padding: 0 5px 2px 7px; border-right: 1px solid #454654; }
.ff-tab .screens { color: #f0432a; margin: 0 2px 0 5px; }
.ff-tab.active { background: #f5f6f7; color: #222; }
.ff-title { flex: 1; overflow: hidden; white-space: nowrap; }
.ff-plus { width: 12px; height: 12px; margin-left: 6px; }
.ff-win { display: flex; gap: 24px; margin: 0 11px 0 auto; }
.ff-nav { display: flex; align-items: center; gap: 11px; height: 30px; padding: 0 8px 0 2px; color: #333; }
.ff-back { display: grid; place-items: center; width: 24px; height: 24px; margin-right: -2px; border: 1px solid #bbb; border-radius: 50%; color: #888; }
.pale { color: #888; }
.ff-url { display: flex; align-items: center; gap: 5px; flex: 0 1 674px; min-width: 0; height: 22px; margin-left: 24px; padding: 0 12px 0 6px; border: 1px solid #a5a5a5; border-right: 0; color: #444; }
.ff-url span { flex: 1; overflow: hidden; white-space: nowrap; font-size: 10px; color: #666; }
.ff-url b { font-weight: 400; color: #111; }
.ff-url i, .ff-icons i, .pdfbar i { width: 1px; height: 18px; background: #bbb; }
.ff-search { display: flex; align-items: center; gap: 5px; flex: 1; height: 22px; margin-left: -12px; padding-left: 12px; border: 1px solid #a5a5a5; border-left: 0; color: #666; font-size: 10px; }
.ff-icons { display: flex; align-items: center; gap: 11px; margin-left: 23px; }
.ff-icons i { margin: 0 -2px; }
.ff-marks { display: flex; align-items: center; gap: 9px; height: 19px; padding: 0 8px 0 9px; }
.ff-marks a { display: flex; align-items: center; gap: 4px; }
.pdfbar { display: flex; align-items: center; height: 25px; padding: 0 6px; border-top: 1px solid #ddd; border-bottom: 1px solid #ccc; background: #fafafb; color: #333; gap: 5px; }
.pdfbar .side { margin-right: 26px; }
.pdfbar label { display: flex; align-items: center; gap: 4px; }
.pdfbar input { width: 40px; height: 19px; padding: 0 5px; border: 1px solid #ccc; background: #fff; text-align: right; }
.pdf-tools { display: flex; align-items: center; gap: 10px; margin-left: auto; }
.pdf-tools i { margin: 0 -4px; }
.sharebar { position: absolute; top: 71px; left: 50%; z-index: 1; display: flex; align-items: center; height: 24px; padding: 0 6px; transform: translateX(-50%); border: 1px solid #999; background: #f6f6f7; white-space: nowrap; gap: 5px; }
.grip { width: 3px; height: 14px; margin-right: 4px; background: repeating-linear-gradient(#777 0 1px, transparent 1px 3px); }
.stop { height: 16px; margin-left: 4px; padding: 0 4px; border-radius: 3px; background: #0560df; color: #fff; }
.sharebar i { width: 1px; height: 14px; background: #ccc; }
.mini { width: 15px; height: 14px; border-radius: 3px; background: #ddd; line-height: 9px; }

.viewer { display: flex; flex: 1; min-height: 0; overflow: hidden; }
.pages { display: flex; flex-direction: column; align-items: center; gap: 8px; flex: 1; overflow: hidden; background: linear-gradient(90deg, #e9edf0, #f0eef0 20%, #eeeef0 80%, #efeff1); }
.sheet { flex: none; width: 722px; max-width: 100%; background: #fff; box-shadow: 0 0 4px #bbb; }
.first { display: grid; grid-auto-rows: 1fr; height: 560px; margin-top: -15px; padding: 0 87px 91px; font-family: "Noto Sans", sans-serif; font-size: 11px; font-weight: 700; line-height: 16px; color: #111; white-space: nowrap; }
.first p { display: flex; align-items: center; }
.first span { white-space: pre; }
.red { background: #ff1a00; color: #420000; }
.blue { background: #00e5ff; color: #04222e; }
.green { background: #04d60a; color: #042c04; }
.sel { position: relative; background: #c8c8f7; color: #202060; }
.sel svg { position: absolute; right: -4px; top: 5px; width: 5px; height: 12px; }
.next { flex: 1; }
.scroll { display: flex; flex-direction: column; align-items: center; width: 11px; padding: 2px 0; background: #f2f2f2; color: #444; }
.thumb { width: 11px; height: 72px; margin: auto 0 112px; background: #cdcdcd; }
.flip { transform: rotate(180deg); }

.ibar { display: flex; align-items: center; height: 25px; padding: 4px 17px 0 0; background: #dae6f2; color: #222; overflow: hidden; }
.istart { width: 35px; color: #000; }
.isearch { display: flex; align-items: center; gap: 8px; width: 250px; height: 29px; padding-left: 9px; border: 1px solid #ccc; background: #fff; }
.isearch input { flex: 1; min-width: 0; font-family: "Noto Sans", sans-serif; font-size: 10px; }
input::placeholder { color: #444; opacity: 1; }
.iapps { display: flex; height: 29px; }
.iapps span { display: grid; place-items: center; width: 36px; }
.iapps svg { width: 17px; height: 17px; }
.iapps .taskview svg { width: 12px; height: 12px; }
.iapps .firefox { background: #f4f7fb; }
.itray { display: flex; gap: 4px; margin-left: auto; }
.itray svg { width: 13px; height: 13px; }
.iclock { display: flex; flex-direction: column; align-items: center; width: 50px; margin: 0 9px 0 5px; font-family: Roboto, sans-serif; font-size: 8px; line-height: 12px; }

/* Participants */
.film { display: flex; align-items: flex-start; gap: 12px; padding: 19px 0 0 68px; font-family: "Liberation Sans", Arial, sans-serif; }
.hd { position: relative; z-index: 3; display: grid; place-items: center; width: 40px; height: 40px; margin-top: 11px; border-radius: 50%; background: #97a3ba; color: #c9ced6; font-size: 14px; font-weight: 700; }
.strip { position: relative; z-index: 3; display: grid; grid-template-columns: 120px 7px; column-gap: 4px; row-gap: 7px; }
.tile { position: relative; display: grid; place-items: center; height: 120px; border-radius: 4px; background: #000; }
.local { grid-column: 1; height: 68px; }
.remote { grid-column: 1; display: flex; flex-direction: column; gap: 4px; margin: 0 -4px; padding: 0 4px; overflow: hidden; }
.remote .tile:first-child { margin-top: -61px; }
.avatar { display: grid; place-items: center; width: 60px; height: 60px; border-radius: 50%; color: rgba(255, 255, 255, .6); font-size: 32px; }
.small { width: 34px; height: 34px; background: #4c5428; font-size: 19px; }
.kebab { position: absolute; left: 7px; bottom: 7px; width: 4px; height: 12px; }
.status { position: absolute; right: 10px; bottom: 5px; display: flex; gap: 5px; color: #fff; }
.status svg { width: 12px; height: 12px; }
.pinned { box-shadow: 0 0 0 2px #165ecc, 0 0 4px 2px #6f9be0; }
.horn { position: absolute; top: 5px; left: 5px; display: grid; place-items: center; width: 22px; height: 22px; border: 2px solid #fff; border-radius: 50%; background: #165ecc; }
.horn svg { width: 10px; height: 10px; }
.level { position: absolute; left: 7px; top: 58px; width: 5px; height: 5px; border-radius: 50%; background: #16325c; }
.rail { align-self: end; width: 7px; height: 250px; border-radius: 4px; background: #555; }
.fold { grid-column: 2; width: 7px; }
.fold svg { width: 12px; height: 12px; }

/* Overlays */
.shade { position: absolute; z-index: 2; inset: 0 0 auto; height: 92px; background: linear-gradient(rgba(0, 0, 0, .5), transparent); pointer-events: none; }
.subject { position: absolute; z-index: 3; top: 25px; left: 50%; display: flex; flex-direction: column; align-items: center; transform: translateX(-50%); color: #fff; font-family: "Liberation Sans", Arial, sans-serif; white-space: nowrap; }
.subject-row { display: flex; align-items: center; gap: 16px; }
.subject h1 { padding-bottom: 2px; font-size: 17px; font-weight: 400; line-height: 20px; text-shadow: 0 0 1px #fff; }
.subject button { gap: 10px; width: 54px; height: 28px; border-radius: 3px; background: #fff; color: #5e6d7a; font-size: 14px; }
.subject button svg { width: 15px; height: 15px; }
.subject time { line-height: 22px; font-size: 15px; color: #ebebeb; }
.notice { position: absolute; z-index: 3; left: 80px; bottom: 72px; display: flex; align-items: flex-start; width: 400px; padding: 24px 17px 19px 20px; border-radius: 3px; background: #283447; box-shadow: 0 16px 24px -6px rgba(9, 30, 66, .3); color: #b8c7e0; font-family: "Liberation Sans", Arial, sans-serif; font-size: 12px; line-height: 16px; }
.notice-body { display: flex; flex-direction: column; gap: 18px; flex: 1; margin-left: 20px; }
.notice a { color: #4c9aff; }
.notice button svg { width: 14px; height: 14px; }
.toolbox { position: absolute; z-index: 3; left: 50%; bottom: 16px; display: flex; align-items: center; gap: 8px; height: 60px; padding: 6px; transform: translateX(-50%); border-radius: 5px; background: #131519; box-shadow: 0 0 6px rgba(0, 0, 0, .5); color: #fff; }
.tool { position: relative; }
.tool-btn { width: 48px; height: 48px; }
.tool-btn svg { width: 20px; height: 20px; }
.caret { position: absolute; top: -3px; right: -4px; width: 17px; height: 17px; border-radius: 3px; background: #36383c; }
.caret svg { width: 10px; height: 10px; }
.dim { color: #8b8d90; }
.badge { position: absolute; right: -5px; bottom: -5px; display: grid; place-items: center; width: 20px; height: 20px; border-radius: 50%; background: #165ecc; font-size: 12px; font-weight: 700; }
.hang { width: 48px; height: 48px; border-radius: 3px; background: #dd3849; }
.hang svg { width: 24px; height: 24px; }
.activate { position: absolute; z-index: 4; right: 67px; bottom: 39px; color: rgba(140, 140, 140, .65); font-family: "Noto Sans", sans-serif; font-size: 14px; line-height: 22px; white-space: nowrap; }
.activate p:first-child { font-size: 19px; line-height: 24px; }

/* Windows taskbar */
.taskbar { display: flex; flex: none; align-items: center; height: 40px; padding-right: 4px; background: linear-gradient(90deg, #24222c, #302229 24%, #47201c 33%, #2a262c 41%, #403537 48%, #1e1d22 60%, #20202a 75%, #1b1b1d); color: #fff; }
.start { width: 48px; height: 40px; }
.find { display: flex; align-items: center; gap: 11px; width: 344px; height: 40px; padding-left: 11px; border: 1px solid #bbb; background: #f1f1f1; color: #222; }
.find svg { width: 17px; height: 17px; }
.find input { flex: 1; min-width: 0; font-family: "Noto Sans", sans-serif; font-size: 14px; }
.app { width: 49px; height: 40px; }
.ring { width: 15px; height: 15px; border: 2px solid #fff; border-radius: 50%; }
.on { background: #655052; border-bottom: 2px solid #76b9ed; border-right: 1px solid #3a2b2d; }
.alert { background: #a85b27; border-bottom: 2px solid #ff7900; }
.tray { display: flex; align-items: center; gap: 8px; margin-left: auto; }
.clock { display: flex; flex-direction: column; align-items: center; width: 58px; margin: 0 0 0 8px; font-size: 11px; line-height: 18px; }
.notes { width: 56px; height: 40px; border-right: 1px solid #777; }
</style>
